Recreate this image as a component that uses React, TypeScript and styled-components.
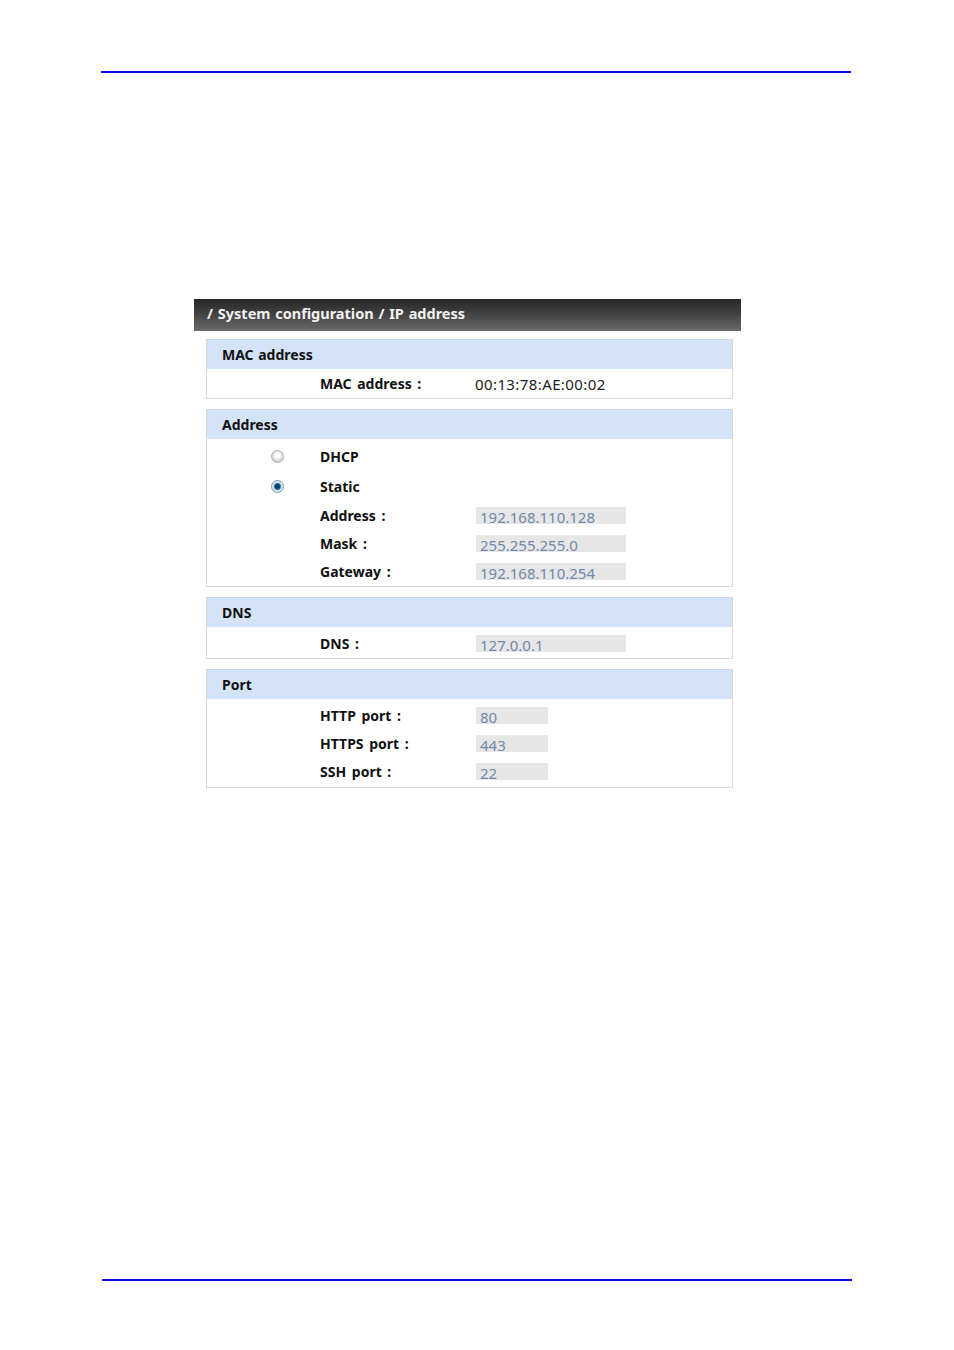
import React from 'react';
import styled, {createGlobalStyle} from 'styled-components';

const GlobalStyle = createGlobalStyle`
  html, body {
    margin: 0;
    padding: 0;
    background: #ffffff;
  }
  body {
    font-family: "Noto Sans", "DejaVu Sans", sans-serif;
    color: #111;
  }
`;

type Field = {label: string; value: string; wide?: boolean};

const addressFields: Field[] = [
  {label: 'Address :', value: '192.168.110.128', wide: true},
  {label: 'Mask :', value: '255.255.255.0', wide: true},
  {label: 'Gateway :', value: '192.168.110.254', wide: true},
];

const portFields: Field[] = [
  {label: 'HTTP port :', value: '80'},
  {label: 'HTTPS port :', value: '443'},
  {label: 'SSH port :', value: '22'},
];

const InputRow = ({field}: {field: Field}) => (
  <Row $height={28}>
    <span />
    <Label>{field.label}</Label>
    <FakeInput $wide={field.wide}>{field.value}</FakeInput>
  </Row>
);

export default function App() {
  return (
    <>
      <GlobalStyle />
      <Page>
        <Rule $top={71} $left={101} />
        <Panel>
          <TitleBar>/ System configuration / IP address</TitleBar>
          <Sections>
            <Section>
              <SectionHead>MAC address</SectionHead>
              <SectionBody>
                <Row $height={29}>
                  <span />
                  <Label>MAC address :</Label>
                  <Value>00:13:78:AE:00:02</Value>
                </Row>
              </SectionBody>
            </Section>

            <Section>
              <SectionHead>Address</SectionHead>
              <SectionBody $top={2} $bottom={1}>
                <Row $height={30}>
                  <Radio />
                  <Label>DHCP</Label>
                </Row>
                <Row $height={30}>
                  <Radio $checked />
                  <Label>Static</Label>
                </Row>
                {addressFields.map(f => (
                  <InputRow key={f.label} field={f} />
                ))}
              </SectionBody>
            </Section>

            <Section>
              <SectionHead>DNS</SectionHead>
              <SectionBody $top={2} $bottom={1}>
                <InputRow field={{label: 'DNS :', value: '127.0.0.1', wide: true}} />
              </SectionBody>
            </Section>

            <Section>
              <SectionHead>Port</SectionHead>
              <SectionBody $top={2} $bottom={2}>
                {portFields.map(f => (
                  <InputRow key={f.label} field={f} />
                ))}
              </SectionBody>
            </Section>
          </Sections>
        </Panel>
        <Rule $top={491} $left={102} />
      </Page>
    </>
  );
}

const Page = styled.div`
  display: flex;
  flex-direction: column;
  width: 954px;
  height: 1350px;
`;

const Rule = styled.div<{$top: number; $left: number}>`
  margin-top: ${p => p.$top}px;
  margin-left: ${p => p.$left}px;
  width: 750px;
  height: 2px;
  background: #0a0ae8;
  flex-shrink: 0;
`;

const Panel = styled.div`
  margin-top: 226px;
  margin-left: 194px;
  width: 547px;
  display: flex;
  flex-direction: column;
`;

const TitleBar = styled.div`
  box-sizing: border-box;
  height: 32px;
  display: flex;
  align-items: center;
  padding: 0 0 4px 13px;
  background: linear-gradient(to bottom, #262626 0%, #444 50%, #6a6a6a 100%);
  color: #f2f2f2;
  font-weight: 700;
  font-size: 14.5px;
  word-spacing: 1px;
`;

const Sections = styled.div`
  display: flex;
  flex-direction: column;
  gap: 10px;
  padding: 8px 8px 0 12px;
`;

const Section = styled.div`
  border: 1px solid #d8d8d8;
  border-top-color: #c9d8ea;
`;

const SectionHead = styled.div`
  height: 29px;
  display: flex;
  align-items: center;
  padding-left: 15px;
  background: #d4e4f8;
  font-weight: 700;
  font-size: 14px;
  word-spacing: 1px;
  color: #111;
`;

const SectionBody = styled.div<{$top?: number; $bottom?: number}>`
  padding-top: ${p => p.$top ?? 0}px;
  padding-bottom: ${p => p.$bottom ?? 0}px;
  background: #fff;
`;

const Row = styled.div<{$height: number}>`
  display: grid;
  grid-template-columns: 113px 155px 1fr;
  align-items: center;
  height: ${p => p.$height}px;
`;

const Label = styled.span`
  font-weight: 700;
  font-size: 14px;
  word-spacing: 2px;
  color: #111;
`;

const Value = styled.span`
  font-size: 15px;
  letter-spacing: 0.4px;
  color: #222;
`;

const FakeInput = styled.span<{$wide?: boolean}>`
  display: block;
  box-sizing: border-box;
  width: ${p => (p.$wide ? 150 : 72)}px;
  height: 17px;
  margin-left: 1px;
  padding: 2px 0 0 4px;
  background: #e6e6e6;
  color: #7088a8;
  font-size: 15px;
  line-height: 17px;
  white-space: nowrap;
`;

const Radio = styled.span<{$checked?: boolean}>`
  justify-self: end;
  margin-right: 36px;
  width: 13px;
  height: 13px;
  box-sizing: border-box;
  border-radius: 50%;
  border: 1px solid ${p => (p.$checked ? '#8096aa' : '#a9a9a9')};
  background: ${p =>
    p.$checked
      ? 'radial-gradient(circle at 50% 50%, #0f3e63 0 2px, #2a79b0 3px, #c9dce9 4px, #f4f4f4 6px)'
      : 'radial-gradient(circle at 50% 40%, #ffffff 0 2px, #e9e9e9 4px, #cfcfcf 6px)'};
`;
